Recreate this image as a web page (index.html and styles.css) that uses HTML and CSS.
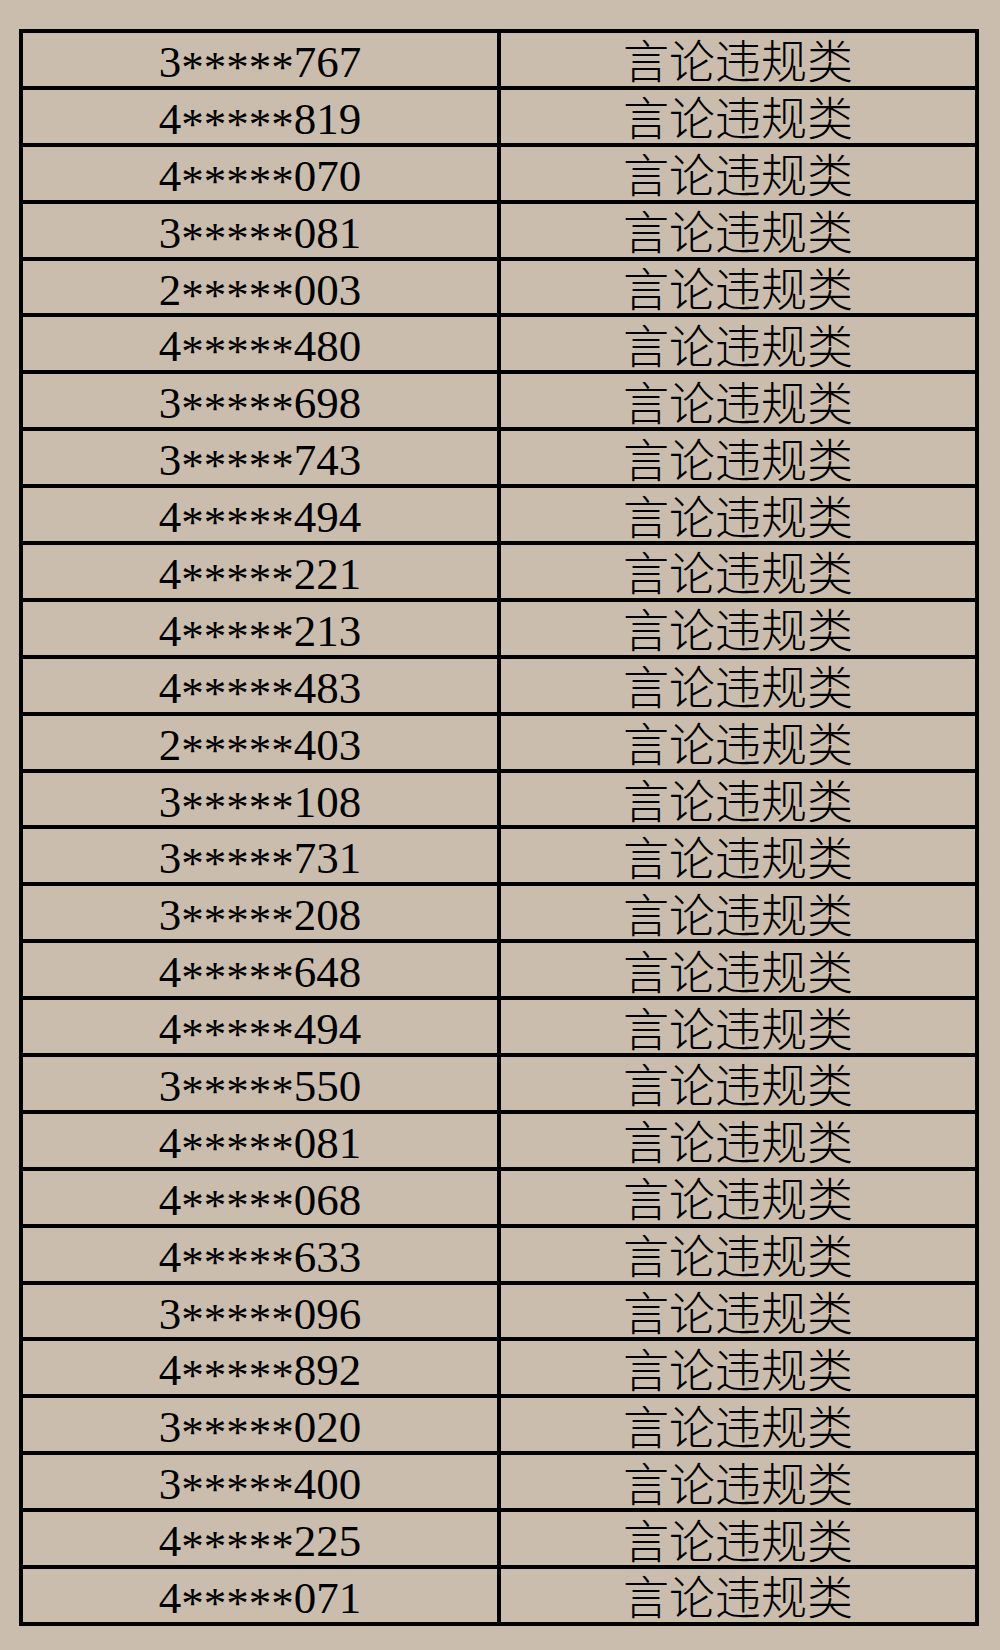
FILE: index.html
```html
<!DOCTYPE html>
<html lang="zh-CN">
<head>
<meta charset="utf-8">
<title>名单</title>
<link rel="stylesheet" href="styles.css">
</head>
<body>
<table class="list">
<colgroup><col class="c1"><col class="c2"></colgroup>
<tbody>
<tr><td class="id">3<span class="mask">*****</span>767</td><td class="cat">言论违规类</td></tr>
<tr><td class="id">4<span class="mask">*****</span>819</td><td class="cat">言论违规类</td></tr>
<tr><td class="id">4<span class="mask">*****</span>070</td><td class="cat">言论违规类</td></tr>
<tr><td class="id">3<span class="mask">*****</span>081</td><td class="cat">言论违规类</td></tr>
<tr><td class="id">2<span class="mask">*****</span>003</td><td class="cat">言论违规类</td></tr>
<tr><td class="id">4<span class="mask">*****</span>480</td><td class="cat">言论违规类</td></tr>
<tr><td class="id">3<span class="mask">*****</span>698</td><td class="cat">言论违规类</td></tr>
<tr><td class="id">3<span class="mask">*****</span>743</td><td class="cat">言论违规类</td></tr>
<tr><td class="id">4<span class="mask">*****</span>494</td><td class="cat">言论违规类</td></tr>
<tr><td class="id">4<span class="mask">*****</span>221</td><td class="cat">言论违规类</td></tr>
<tr><td class="id">4<span class="mask">*****</span>213</td><td class="cat">言论违规类</td></tr>
<tr><td class="id">4<span class="mask">*****</span>483</td><td class="cat">言论违规类</td></tr>
<tr><td class="id">2<span class="mask">*****</span>403</td><td class="cat">言论违规类</td></tr>
<tr><td class="id">3<span class="mask">*****</span>108</td><td class="cat">言论违规类</td></tr>
<tr><td class="id">3<span class="mask">*****</span>731</td><td class="cat">言论违规类</td></tr>
<tr><td class="id">3<span class="mask">*****</span>208</td><td class="cat">言论违规类</td></tr>
<tr><td class="id">4<span class="mask">*****</span>648</td><td class="cat">言论违规类</td></tr>
<tr><td class="id">4<span class="mask">*****</span>494</td><td class="cat">言论违规类</td></tr>
<tr><td class="id">3<span class="mask">*****</span>550</td><td class="cat">言论违规类</td></tr>
<tr><td class="id">4<span class="mask">*****</span>081</td><td class="cat">言论违规类</td></tr>
<tr><td class="id">4<span class="mask">*****</span>068</td><td class="cat">言论违规类</td></tr>
<tr><td class="id">4<span class="mask">*****</span>633</td><td class="cat">言论违规类</td></tr>
<tr><td class="id">3<span class="mask">*****</span>096</td><td class="cat">言论违规类</td></tr>
<tr><td class="id">4<span class="mask">*****</span>892</td><td class="cat">言论违规类</td></tr>
<tr><td class="id">3<span class="mask">*****</span>020</td><td class="cat">言论违规类</td></tr>
<tr><td class="id">3<span class="mask">*****</span>400</td><td class="cat">言论违规类</td></tr>
<tr><td class="id">4<span class="mask">*****</span>225</td><td class="cat">言论违规类</td></tr>
<tr><td class="id">4<span class="mask">*****</span>071</td><td class="cat">言论违规类</td></tr>
</tbody>
</table>
</body>
</html>
```
FILE: styles.css
```css
html, body {
  margin: 0;
  padding: 0;
  background: #cbbdad;
}
body {
  padding: 29px 0 0 19px;
  height: 1650px;
  box-sizing: border-box;
  overflow: hidden;
}
.list {
  border-collapse: collapse;
  table-layout: fixed;
  width: 960px;
  font-family: "Liberation Serif", "Noto Sans CJK SC", serif;
  font-size: 45px;
  color: #000;
}
.c1 { width: 50%; }
.c2 { width: 50%; }
.list td {
  border: 4px solid #000;
  height: 47.9px;
  padding: 5px 0 0 0;
  line-height: 40px;
  text-align: center;
  vertical-align: middle;
  white-space: nowrap;
}
.mask {
  vertical-align: -0.12em;
  line-height: 0;
}
.list td.cat {
  font-family: "Noto Sans CJK SC", sans-serif;
  font-size: 46px;
  font-weight: 300;
  padding-top: 0;
  padding-bottom: 2px;
  height: 50.9px;
}
```
